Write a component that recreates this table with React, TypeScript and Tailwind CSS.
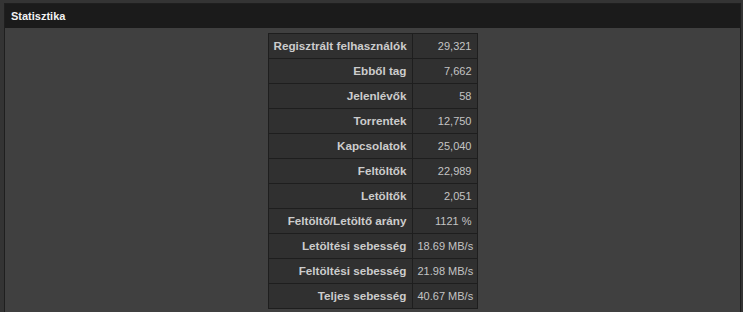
import React from "react";

const rows: [string, string][] = [
  ["Regisztrált felhasználók", "29,321"],
  ["Ebből tag", "7,662"],
  ["Jelenlévők", "58"],
  ["Torrentek", "12,750"],
  ["Kapcsolatok", "25,040"],
  ["Feltöltők", "22,989"],
  ["Letöltők", "2,051"],
  ["Feltöltő/Letöltő arány", "1121 %"],
  ["Letöltési sebesség", "18.69 MB/s"],
  ["Feltöltési sebesség", "21.98 MB/s"],
  ["Teljes sebesség", "40.67 MB/s"],
];

export default function App() {
  return (
    <div
      className="h-[312px] w-[743px] overflow-hidden bg-[#343434] pt-[3px] pl-[4px] pr-[2px]"
      style={{ fontFamily: '"Liberation Sans", Arial, sans-serif' }}
    >
      <div className="h-[320px] border border-[#1f1f1f] bg-[#404040]">
        <div className="flex h-[24px] items-center bg-[#1b1b1b] px-[6px] text-[11px] font-bold text-[#f2f2f2]">
          Statisztika
        </div>
        <div className="flex justify-center pt-[5px]">
          <table className="w-[209px] table-fixed border-collapse">
            <colgroup>
              <col className="w-[144px]" />
              <col className="w-[65px]" />
            </colgroup>
            <tbody>
              {rows.map(([label, value]) => (
                <tr key={label} className="h-[25px]">
                  <td className="whitespace-nowrap border border-[#1e1e1e] bg-[#303030] px-[5px] text-right text-[11.7px] font-bold text-[#cccccc]">
                    {label}
                  </td>
                  <td className="whitespace-nowrap border border-[#1e1e1e] bg-[#303030] px-[5px] text-right text-[11px] text-[#c4c4c4]">
                    {value}
                  </td>
                </tr>
              ))}
            </tbody>
          </table>
        </div>
      </div>
    </div>
  );
}
